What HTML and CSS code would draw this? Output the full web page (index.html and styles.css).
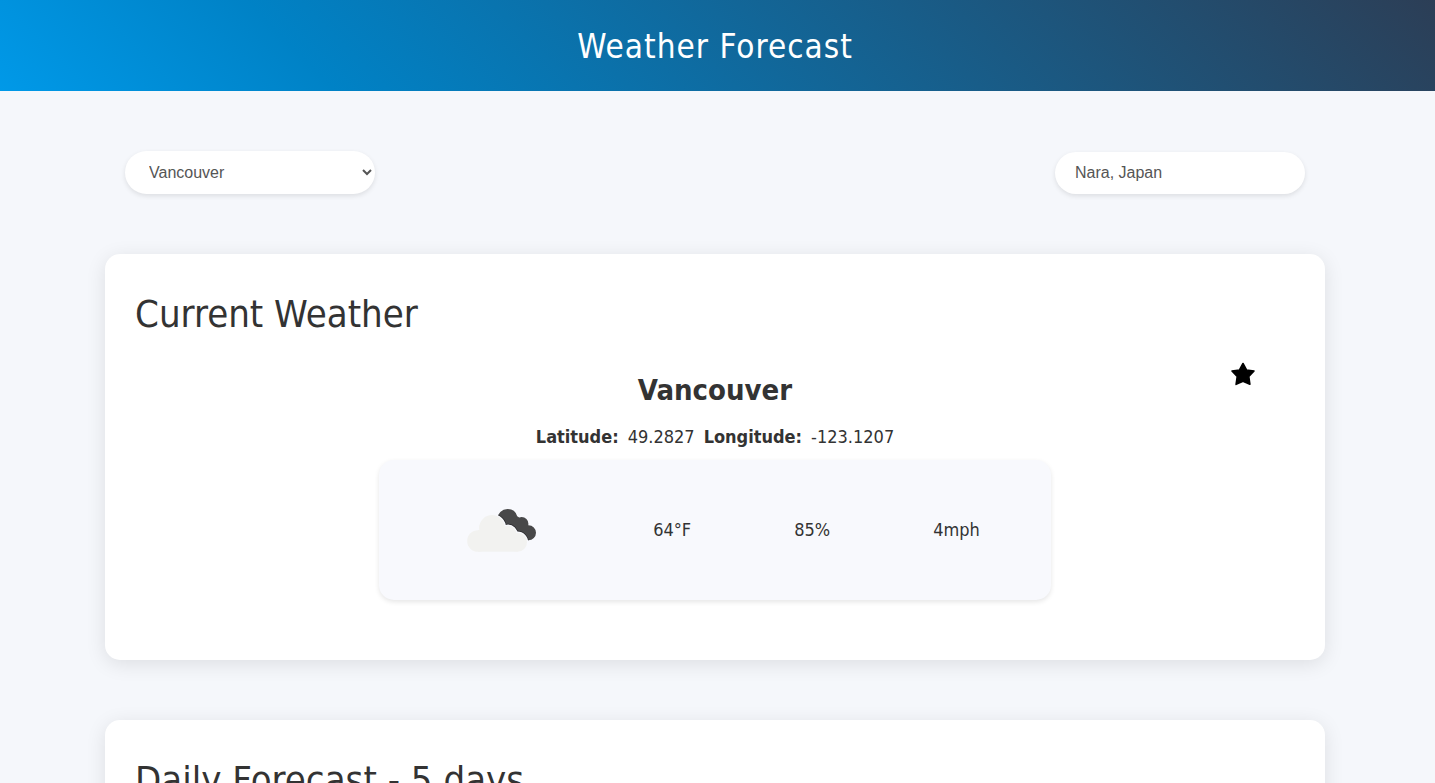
FILE: index.html
```html
<!DOCTYPE html>
<html lang="en">
<head>
<meta charset="utf-8">
<meta name="viewport" content="width=device-width, initial-scale=1">
<title>Weather Forecast</title>
<link rel="stylesheet" href="styles.css">
</head>
<body>
<header class="site-header">
  <h1 class="site-title">Weather Forecast</h1>
</header>
<main class="container">
  <form class="controls">
    <select class="field field-select" aria-label="Saved city">
      <option selected>Vancouver</option>
      <option>Nara</option>
    </select>
    <input class="field field-input" type="text" value="Nara, Japan" aria-label="Search city">
  </form>
  <section class="card">
    <h2 class="card-title">Current Weather</h2>
    <div class="current">
      <button class="favorite" type="button" aria-label="Favorite">
        <svg class="star" viewBox="0 0 24 24" aria-hidden="true"><path d="M12 1.500 15.500 8 23 9 17.800 14.500 18.900 22.300 12 19.200 5.100 22.300 6.200 14.500 1 9 8.500 8Z" fill="#000" stroke="#000" stroke-width="1.6" stroke-linejoin="round"/></svg>
      </button>
      <h3 class="city">Vancouver</h3>
      <p class="coords"><strong>Latitude:</strong><span>49.2827</span><strong>Longitude:</strong><span>-123.1207</span></p>
      <div class="conditions">
        <svg class="weather-icon" viewBox="-2 0 100 100" role="img" aria-label="Broken clouds">
          <defs>
            <clipPath id="back"><circle cx="55.500" cy="39.300" r="10.200"/><circle cx="69.700" cy="43.700" r="6.700"/><circle cx="76.500" cy="52.700" r="7.500"/><path d="M48 42 62 34 71 40 80 50 74 60 62 52Z"/></clipPath>
            <g id="front"><circle cx="26" cy="61" r="10.800"/><circle cx="40" cy="48" r="12.900"/><circle cx="56" cy="54.300" r="8.500"/><circle cx="65.500" cy="62.300" r="9.500"/><path d="M26 50H56L65.500 60V71.800H26Z"/></g>
          </defs>
          <g clip-path="url(#back)">
            <path d="M40 25H90V65H40Z" fill="#484849"/>
            <use href="#front" fill="#29292b" stroke="#29292b" stroke-width="4"/>
          </g>
          <use href="#front" fill="#f8f9fd" stroke="#f8f9fd" stroke-width="2.4"/>
          <use href="#front" fill="#f2f2f0"/>
        </svg>
        <span>64°F</span>
        <span>85%</span>
        <span>4mph</span>
      </div>
    </div>
  </section>
  <section class="card">
    <h2 class="card-title">Daily Forecast - 5 days</h2>
  </section>
</main>
</body>
</html>
```
FILE: styles.css
```css
* { box-sizing: border-box; }
html { scrollbar-width: none; }
body {
  margin: 0;
  background: #f5f7fb;
  color: #333;
  font-family: Tahoma, "DejaVu Sans Condensed", "DejaVu Sans", sans-serif;
  font-size: 18px;
  line-height: 22px;
}
h1, h2, h3, p { margin: 0; }
.site-header {
  padding: 27px 5px 24px 0;
  background: linear-gradient(45deg, #0099e8 0%, #0082c6 22%, #2c3e56 100%);
  color: #fff;
  text-align: center;
}
.site-title { font-size: 33px; line-height: 40px; font-weight: 500; letter-spacing: 1px; }
.container {
  max-width: 1435px;
  margin: 0 auto;
  padding: 60px 110px 0 105px;
  display: flex;
  flex-direction: column;
  gap: 60px;
}
.controls { display: flex; justify-content: space-between; align-items: flex-end; padding: 0 20px; }
.field {
  width: 250px;
  border: 0;
  border-radius: 25px;
  background-color: #fff;
  color: #555;
  box-shadow: 0 2px 5px rgba(0, 0, 0, 0.1);
  font-family: "Liberation Sans", Arial, sans-serif;
  font-size: 16px;
}
.field-select { height: 43px; padding: 0 0 0 20px; }
.field-input { height: 42px; padding: 0 20px; }
.card {
  padding: 30px 30px 60px;
  border-radius: 15px;
  background: #fff;
  box-shadow: 0 4px 20px rgba(0, 0, 0, 0.1);
}
.card-title { font-size: 38px; line-height: 60px; font-weight: 400; }
.current { position: relative; display: flex; flex-direction: column; align-items: center; padding-top: 26px; }
.favorite { position: absolute; top: 18px; right: 40px; padding: 0; border: 0; background: none; }
.star { display: block; width: 24px; height: 24px; }
.city { font-size: 29px; line-height: 40px; }
.coords { display: flex; gap: 9px; padding: 16px 0 12px; }
.conditions {
  width: 58%;
  display: flex;
  justify-content: space-around;
  align-items: center;
  padding: 20px;
  border-radius: 15px;
  background: #f8f9fd;
  box-shadow: 0 2px 5px rgba(0, 0, 0, 0.1);
}
.weather-icon { width: 100px; height: 100px; }
```
